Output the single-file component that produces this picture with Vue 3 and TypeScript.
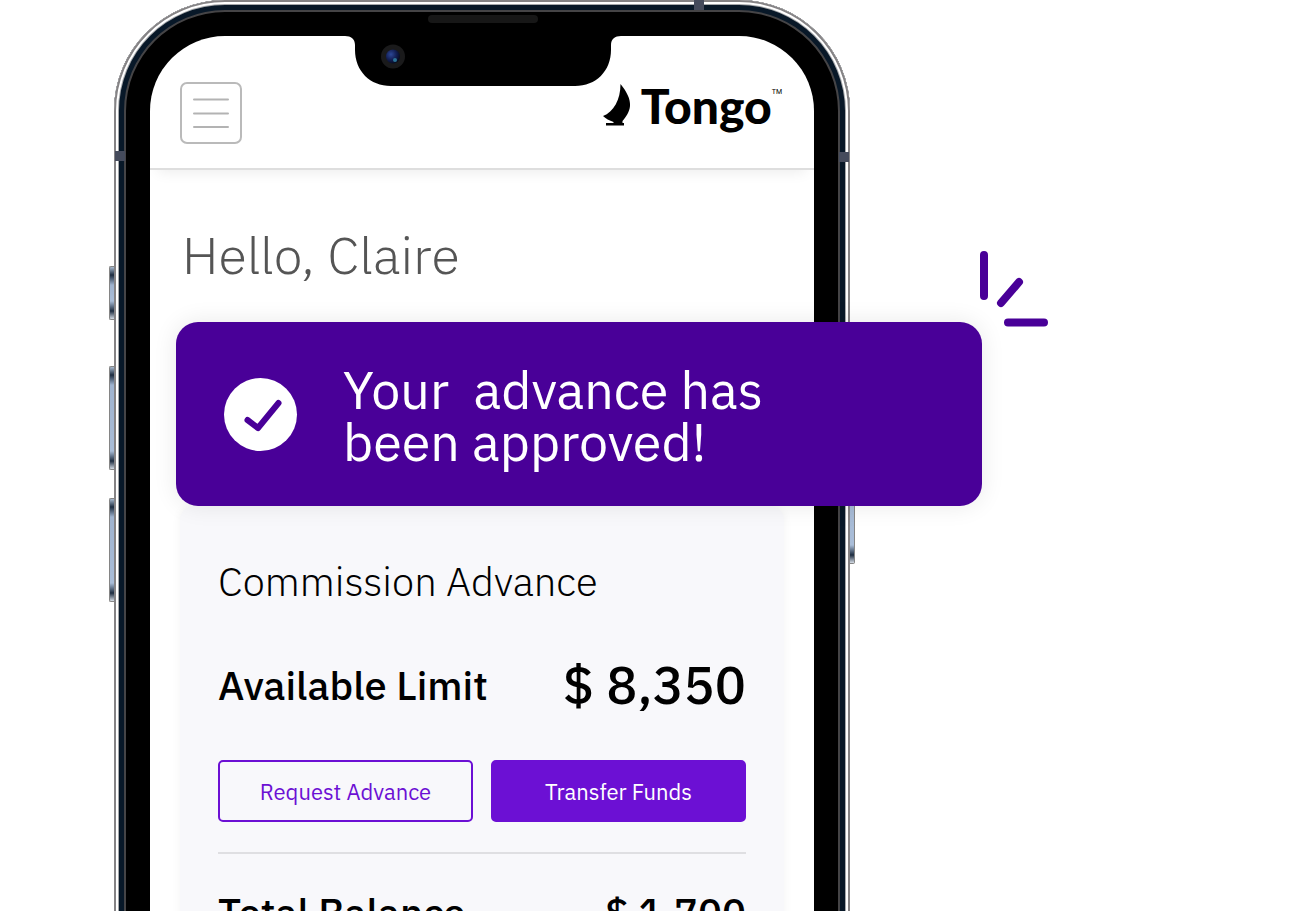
<script setup lang="ts">
interface Balance {
  label: string
  amount: string
}

const userName = 'Claire'
const limit: Balance = { label: 'Available Limit', amount: '$ 8,350' }
const total: Balance = { label: 'Total Balance', amount: '$ 1,700' }
const sideKeys = ['mute', 'volume-up', 'volume-down', 'power']
const antennas = ['top', 'left', 'right']
</script>

<template>
  <main class="stage">
    <div class="phone">
      <i v-for="key in sideKeys" :key="key" class="key" :class="key"></i>
      <i v-for="side in antennas" :key="side" class="antenna" :class="side"></i>
      <i class="speaker"></i>

      <div class="screen">
        <svg class="notch" viewBox="0 0 276 52" aria-hidden="true">
          <defs>
            <radialGradient id="lens" cx="35%" cy="35%" r="70%">
              <stop offset="0" stop-color="#2c4796" />
              <stop offset="0.55" stop-color="#131f55" />
              <stop offset="1" stop-color="#060a1c" />
            </radialGradient>
          </defs>
          <path d="M0 0H276V1C270 1 266 4 266 10V15C266 36 251 51 230 51H46C25 51 10 36 10 15V10C10 4 6 1 0 1Z" />
          <circle cx="48" cy="21.500" r="12" fill="#1a1a1b" />
          <circle cx="48" cy="21.500" r="7" fill="url(#lens)" />
          <circle cx="50" cy="25" r="2" fill="#2b7396" />
        </svg>

        <header class="bar">
          <button class="menu" type="button" aria-label="Menu">
            <svg viewBox="0 0 36 30" aria-hidden="true">
              <path d="M1 1.500H35M1 15.500H35M1 29H35" />
            </svg>
          </button>
          <a class="brand" href="#">
            <svg viewBox="0 0 28 42" aria-hidden="true">
              <path d="M17.500 0C24 8 27.500 15 27 22C26.500 28 23 33 19.500 37V39H21V41.500H3V39H10.500V38C6.500 36.500 2.500 34.500 0 32C10.500 28 17.500 16 17.500 0Z" />
            </svg>
            <span class="word">Tongo</span><sup>TM</sup>
          </a>
        </header>

        <h1 class="hello">Hello, {{ userName }}</h1>

        <section class="banner" role="status">
          <svg class="check" viewBox="0 0 74 74" aria-hidden="true">
            <circle cx="36.500" cy="37.500" r="36.500" fill="#fff" />
            <path d="M23.500 43L34 51L54.500 26" />
          </svg>
          <p>{{ 'Your  advance has\nbeen approved!' }}</p>
          <svg class="spark" viewBox="0 0 70 78" aria-hidden="true">
            <path d="M5 5V46M22 53L40 32M29 72.500H65" />
          </svg>
        </section>

        <section class="card">
          <h2>Commission Advance</h2>
          <div class="row limit">
            <span>{{ limit.label }}</span>
            <strong>{{ limit.amount }}</strong>
          </div>
          <div class="actions">
            <button type="button">Request Advance</button>
            <button type="button" class="solid">Transfer Funds</button>
          </div>
          <div class="row total">
            <span>{{ total.label }}</span>
            <strong>{{ total.amount }}</strong>
          </div>
        </section>
      </div>
    </div>
  </main>
</template>

<style>
body {
  background: #fff;
}
</style>

<style scoped>
.stage {
  box-sizing: border-box;
  height: 100vh;
  padding-left: 114px;
  overflow: hidden;
  font-family: "IBM Plex Sans", Roboto, "Noto Sans", sans-serif;
  color: #000;
}

.phone {
  position: relative;
  box-sizing: border-box;
  width: 100%;
  max-width: 736px;
  padding: 36px;
  border-radius: 111px;
  background: #000;
  box-shadow:
    inset 0 0 0 2px #858385,
    inset 0 0 0 4px #fff,
    inset 0 0 0 5px #a5a7aa,
    inset 0 0 0 10px #081828,
    inset 0 0 0 12px #454446;
}

.key {
  position: absolute;
  left: -5px;
  box-sizing: border-box;
  width: 5px;
  border: 1px solid #858585;
  border-right: 0;
  border-radius: 2px 0 0 2px;
  background: linear-gradient(#a9bbd0, #1d2c40 8px, #9fb3cf 18px, #a9bdd8 calc(100% - 18px), #1d2c40 calc(100% - 8px), #d5dce5);
}

.mute {
  top: 266px;
  height: 54px;
}

.volume-up {
  top: 366px;
  height: 104px;
}

.volume-down {
  top: 498px;
  height: 104px;
}

.power {
  top: 398px;
  right: -5px;
  left: auto;
  height: 166px;
  border-right: 1px solid #858585;
  border-left: 0;
  border-radius: 0 2px 2px 0;
}

.antenna {
  position: absolute;
  width: 10px;
  height: 10px;
  background: #454b5c;
}

.top {
  top: 0;
  right: 146px;
}

.left {
  top: 151px;
  left: 1px;
}

.right {
  top: 152px;
  right: 1px;
}

.speaker {
  position: absolute;
  top: 15px;
  left: 50%;
  width: 110px;
  height: 8px;
  margin-left: -54px;
  border-radius: 4px;
  background: #171717;
}

.screen {
  position: relative;
  padding-bottom: 75px;
  border-radius: 75px;
  background: #fff;
}

.notch {
  position: absolute;
  top: -1px;
  left: 50%;
  width: 276px;
  height: 52px;
  margin-left: -137px;
}

.bar {
  display: flex;
  justify-content: space-between;
  box-sizing: border-box;
  height: 134px;
  padding: 46px 32px 0 30px;
  border-bottom: 2px solid #dedede;
  border-radius: 75px 75px 0 0;
  box-shadow: 0 10px 14px -8px rgba(0, 0, 0, 0.08);
}

.menu {
  display: grid;
  place-items: center;
  box-sizing: border-box;
  width: 62px;
  height: 62px;
  padding: 0;
  border: 2px solid #bababa;
  border-radius: 7px;
  background: #fff;
}

.menu svg {
  width: 36px;
  height: 30px;
  fill: none;
  stroke: #b3b3b3;
  stroke-width: 2;
  stroke-linecap: round;
}

.brand {
  display: flex;
  align-items: flex-start;
  color: #000;
  text-decoration: none;
}

.brand svg {
  width: 28px;
  height: 42px;
  margin: 2px 10px 0 0;
}

.word {
  font: 900 48px/48px Lato, sans-serif;
}

.brand sup {
  margin: 6px 0 0;
  font: 400 7px/8px Roboto, sans-serif;
}

.hello {
  margin: 52px 32px 34px;
  font-size: 52px;
  line-height: 66px;
  font-weight: 300;
  color: #555;
}

.banner {
  position: relative;
  display: flex;
  align-items: center;
  gap: 45px;
  box-sizing: border-box;
  min-height: 184px;
  margin: 0 -168px 0 26px;
  padding: 36px 48px;
  border-radius: 22px;
  background: #490098;
  box-shadow: 0 0 24px rgba(0, 0, 0, 0.09);
  color: #fff;
}

.check {
  flex: none;
  width: 74px;
  height: 74px;
}

.check path {
  fill: none;
  stroke: #490098;
  stroke-width: 6;
  stroke-linecap: round;
  stroke-linejoin: round;
}

.banner p {
  margin: 0;
  padding-top: 4px;
  font-size: 52px;
  line-height: 52px;
  white-space: pre-wrap;
}

.spark {
  position: absolute;
  top: -72px;
  right: -67px;
  width: 70px;
  height: 78px;
  fill: none;
  stroke: #490098;
  stroke-width: 8;
  stroke-linecap: round;
}

.card {
  margin: 0 30px;
  padding: 49px 38px;
  border-radius: 14px;
  background: #f8f8fb;
  box-shadow: 0 0 10px rgba(0, 0, 0, 0.05);
}

.card h2 {
  margin: 0;
  font-size: 40px;
  line-height: 52px;
  font-weight: 300;
}

.row {
  display: flex;
  align-items: center;
  justify-content: space-between;
  font-size: 40px;
  line-height: 64px;
  font-weight: 500;
}

.row strong {
  font-weight: 500;
}

.limit {
  margin-top: 46px;
}

.limit strong {
  font-size: 52px;
}

.actions {
  display: grid;
  grid-template-columns: 1fr 1fr;
  gap: 18px;
  margin-top: 43px;
  padding-bottom: 30px;
  border-bottom: 2px solid #dfdfe2;
}

.actions button {
  height: 62px;
  padding: 0 8px;
  border: 2px solid #6c10d4;
  border-radius: 5px;
  background: transparent;
  font: inherit;
  font-size: 22px;
  color: #6c10d4;
}

.actions .solid {
  background: #6c10d4;
  color: #fff;
}

.total {
  margin-top: 26px;
}
</style>
